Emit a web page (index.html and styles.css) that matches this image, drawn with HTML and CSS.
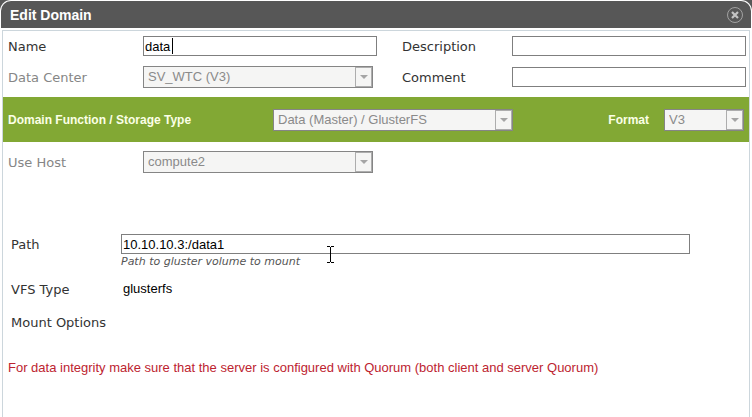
FILE: index.html
```html
<!DOCTYPE html>
<html lang="en">
<head>
  <meta charset="UTF-8" />
  <meta name="viewport" content="width=device-width, initial-scale=1" />
  <title>Edit Domain</title>
  <link rel="stylesheet" href="styles.css">
</head>
<body>
<div class="dialog">
  <header class="title-bar">
    <h1>Edit Domain</h1>
    <button class="close" type="button" aria-label="Close">
      <svg width="18" height="18" viewBox="0 0 18 18">
        <circle cx="9" cy="9" r="7.5" fill="none" stroke="#a2a2a2" stroke-width="1" />
        <path d="M6 6l6 6M12 6l-6 6" stroke="#c4c4c4" stroke-width="2.2" />
      </svg>
    </button>
  </header>

  <form class="panel">
    <div class="general">
      <label for="name">Name</label>
      <div class="text-field">
        <input id="name" type="text" value="data">
        <span class="caret"></span>
      </div>
      <label class="second" for="description">Description</label>
      <input id="description" type="text">

      <label class="disabled" for="dataCenter">Data Center</label>
      <div class="drop-down data-center">
        <select id="dataCenter" disabled><option>SV_WTC (V3)</option></select>
        <span class="arrow"></span>
      </div>
      <label class="second" for="comment">Comment</label>
      <input id="comment" type="text">
    </div>

    <div class="storage-bar">
      <label class="function-label" for="storageType">Domain Function / Storage Type</label>
      <div class="drop-down storage-type">
        <select id="storageType" disabled><option>Data (Master) / GlusterFS</option></select>
        <span class="arrow"></span>
      </div>
      <label class="format-label" for="format">Format</label>
      <div class="drop-down format">
        <select id="format" disabled><option>V3</option></select>
        <span class="arrow"></span>
      </div>
    </div>

    <div class="general host">
      <label class="disabled" for="host">Use Host</label>
      <div class="drop-down data-center">
        <select id="host" disabled><option>compute2</option></select>
        <span class="arrow"></span>
      </div>
    </div>

    <div class="gluster">
      <label for="path">Path</label>
      <div class="path-field">
        <input id="path" type="text" value="10.10.10.3:/data1">
        <svg class="pointer" width="7" height="17" viewBox="0 0 7 17">
          <path d="M0 .5h3M4 .5h3M3.5 1v15M0 16.5h3M4 16.5h3" fill="none" stroke="#000" />
        </svg>
        <p class="hint">Path to gluster volume to mount</p>
      </div>
      <label for="vfsType">VFS Type</label>
      <output id="vfsType">glusterfs</output>
      <span class="mount-label">Mount Options</span>
    </div>

    <p class="warning">For data integrity make sure that the server is configured with Quorum (both client and server Quorum)</p>
  </form>
</div>
</body>
</html>
```

FILE: styles.css
```css
:root {
  --bar: #575757;
  --green: #82a834;
  --line: #ccd6dc;
  --field-line: #7f7f7f;
}
* {
  box-sizing: border-box;
}
body {
  margin: 0;
  background-color: var(--bar);
  font-family: Verdana, "DejaVu Sans", sans-serif;
  font-size: 13px;
  line-height: 20px;
  color: #333;
}
h1,
p {
  margin: 0;
}
.dialog {
  display: flex;
  flex-direction: column;
  min-height: 100vh;
  padding: 1px 1px 0 1px;
  background-color: #fff;
  border-radius: 11px 11px 0 0;
}
.title-bar {
  display: flex;
  align-items: center;
  justify-content: space-between;
  height: 27px;
  padding: 0 7px 0 9px;
  background-color: var(--bar);
  border-radius: 10px 10px 0 0;
}
h1 {
  font: bold 14px/20px "Liberation Sans", Arial, sans-serif;
  color: #fff;
}
.close {
  width: 18px;
  height: 18px;
  padding: 0;
  border: none;
  background: none;
  cursor: pointer;
}
.close svg {
  display: block;
}
.panel {
  flex-grow: 1;
  margin: 2px 1px 0 1px;
  border: 1px solid var(--line);
  border-bottom: none;
}

/* fields */
input,
select,
output,
.warning {
  font: 13px/18px "Liberation Sans", Arial, sans-serif;
}
input {
  display: block;
  width: 100%;
  height: 20px;
  padding: 0 1px;
  border: 1px solid var(--field-line);
  border-radius: 0;
  background-color: #fff;
  color: #000;
}
.text-field {
  position: relative;
}
.caret {
  position: absolute;
  left: 29px;
  top: 2px;
  width: 1px;
  height: 16px;
  background-color: #000;
}
.drop-down {
  display: flex;
  height: 22px;
  border: 1px solid #858585;
  background-color: #f5f5f4;
}
select {
  flex-grow: 1;
  min-width: 0;
  padding: 0 4px;
  border: none;
  appearance: none;
  background: none;
}
select:disabled {
  color: #8a8a8a;
  opacity: 1;
}
.arrow {
  display: flex;
  align-items: center;
  justify-content: center;
  width: 17px;
  border: 1px solid #adadad;
}
.arrow::after {
  content: "";
  border: 4px solid transparent;
  border-top-color: #a5a5a5;
  border-bottom: none;
}

/* rows */
.general {
  display: grid;
  grid-template-columns: 135px 1fr 135px 1fr;
  row-gap: 10px;
  align-items: center;
  padding: 5px 3px 9px 5px;
}
.general label,
.gluster label {
  padding-top: 2px;
  line-height: 18px;
}
.general .second {
  padding-left: 25px;
}
.disabled {
  color: #868686;
}
.data-center {
  margin-right: 4px;
}
.storage-bar {
  display: flex;
  align-items: center;
  height: 45px;
  padding: 0 5px;
  background-color: var(--green);
  font: bold 12px/20px "Liberation Sans", Arial, sans-serif;
  color: #fbffe6;
}
.function-label {
  width: 265px;
}
.storage-type {
  width: 240px;
}
.format-label {
  margin-left: auto;
  padding-right: 15px;
}
.format {
  width: 80px;
}
.host {
  padding-top: 9px;
}
.gluster {
  display: grid;
  grid-template-columns: 110px 1fr;
  padding: 52px 59px 0 8px;
  row-gap: 9px;
}
.path-field {
  position: relative;
}
.hint {
  font-size: 11px;
  line-height: 16px;
  font-style: italic;
  color: #555;
}
.pointer {
  position: absolute;
  left: 206px;
  top: 12px;
}
output {
  line-height: 20px;
  padding-left: 2px;
  color: #000;
}
.mount-label {
  margin-top: 5px;
}
.warning {
  padding: 26px 5px 20px 5px;
  color: #bd2430;
}
```
